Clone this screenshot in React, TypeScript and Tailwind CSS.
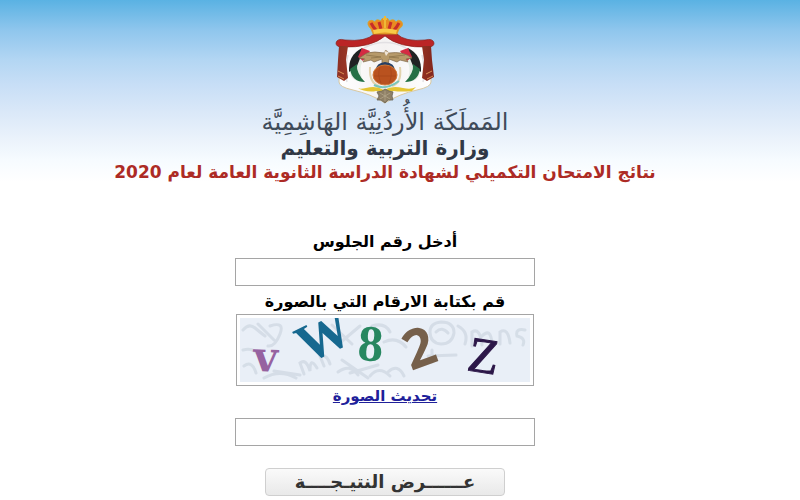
import { useState } from "react";

function Emblem() {
  return (
    <svg viewBox="0 0 130 100" className="h-[100px] w-[130px]" role="img" aria-label="شعار المملكة">
      <defs>
        <linearGradient id="mantle" x1="0" x2="1">
          <stop offset="0" stopColor="#fff" />
          <stop offset="0.5" stopColor="#f4f2f2" />
          <stop offset="1" stopColor="#fff" />
        </linearGradient>
        <linearGradient id="drape" x1="0" x2="1">
          <stop offset="0" stopColor="#8d2f22" />
          <stop offset="0.5" stopColor="#c2502f" />
          <stop offset="1" stopColor="#82261d" />
        </linearGradient>
      </defs>
      <path d="M20 36 Q48 34 65 24 Q83 34 110 36 L111 72 Q111 77 97 80 Q79 84 65 93 Q51 84 33 80 Q19 77 19 72Z" fill="url(#mantle)" stroke="#d9c8a0" strokeWidth="1" />
      <path d="M44 38 Q65 27 86 38 M28 45 Q24 60 27 72 M102 45 Q106 60 103 72" fill="none" stroke="#e2e0e3" strokeWidth="1.5" />
      <path d="M16 33 Q17 28 25 30 Q46 32 54 24 H77 Q85 32 105 30 Q113 28 114 33 Q114 37 108 37 Q79 38 65 26 Q51 38 22 37 Q16 37 16 33Z" fill="#bb2526" stroke="#8b201b" strokeWidth=".7" />
      <path d="M19 36 H28 L26 50 L28 68 L24 71 L17 67 L18 50Z M102 36 H111 L112 50 L114 67 L107 71 L102 68 L104 50Z" fill="url(#drape)" />
      <path d="M18 61 L24 64 M18 66 L24 69 M106 64 L112 61 M107 69 L113 66" stroke="#dc8f55" strokeWidth="1" />
      <path d="M53 24 L51 19 Q46 14 49 11 Q52 9 55 12 Q56 8 61 11 Q61 8 65 8 Q69 8 69 11 Q74 8 76 12 Q78 9 81 11 Q85 15 79 19 L77 24Z" fill="#e98b22" stroke="#d4a32b" strokeWidth=".8" />
      <path d="M51 13 Q53 17 56 20 M59 12 L61 19 M71 12 L69 19 M79 13 Q77 17 74 20" stroke="#c82d29" strokeWidth="3" fill="none" />
      <path d="M53 20 Q65 17 77 20 L76 24 Q65 21 54 24Z" fill="#f8ca47" />
      <path d="M65 6V18M63 9H67" stroke="#efb936" strokeWidth="2" />
      <g>
        <path d="M41 40 Q26 50 31 66 Q35 73 43 70 Q37 57 46 46Z" fill="#e6eee6" />
        <path d="M42 38 Q28 45 29 62 L37 56 L41 46Z" fill="#202323" />
        <path d="M30 59 Q32 72 45 72 Q36 63 37 54Z" fill="#247045" />
        <path d="M42 38 L50 41 L43 51 L38 47Z" fill="#d42b43" />
        <path d="M89 40 Q104 50 99 66 Q95 73 87 70 Q93 57 84 46Z" fill="#e6eee6" />
        <path d="M88 38 Q102 45 101 62 L93 56 L89 46Z" fill="#202323" />
        <path d="M100 59 Q98 72 85 72 Q94 63 93 54Z" fill="#247045" />
        <path d="M88 38 L80 41 L87 51 L92 47Z" fill="#d42b43" />
      </g>
      <path d="M64 43 Q54 41 47 43 L39 48 L45 49 L43 52 L51 50 L54 52 L62 49 L62 56 H68 L69 49 L77 52 L80 50 L88 52 L86 49 L92 48 Q83 41 69 43 Q65 38 64 43Z" fill="#b79a6a" stroke="#806748" strokeWidth=".7" />
      <path d="M46 45 L61 47 M51 48 L61 47 M69 47 L85 45 M69 47 L79 48" stroke="#8d7449" strokeWidth=".8" />
      <path d="M64 41 L69 42 L66 46Z" fill="#efe5d8" />
      <path d="M50 57 Q49 73 59 76 M80 57 Q82 73 72 76" fill="none" stroke="#e2d3ae" strokeWidth="2" />
      <path d="M54 75 Q65 81 79 71" stroke="#79c6ba" strokeWidth="2" fill="none" />
      <path d="M56 60 Q56 53 65 52 Q75 53 75 61Z" fill="#274065" />
      <ellipse cx="65" cy="65" rx="12" ry="10" fill="#b9521f" stroke="#d17835" />
      <path d="M54 66 H76 M60 57 Q57 65 61 73 M70 57 Q73 65 69 73" stroke="#a24319" strokeWidth=".6" fill="none" />
      <path d="M35 77 Q39 80 46 78 Q56 75 64 80 Q72 75 83 78 Q91 80 96 77 L92 81 Q81 82 74 81 L65 83 L56 81 Q47 83 35 77Z" fill="#e4c432" />
      <path d="M65 79 L69 81 L73 82 L72 86 L73 90 L68 90 L65 93 L61 90 L57 90 L59 86 L57 82 L62 81Z" fill="#8f8066" stroke="#6a6458" strokeWidth=".8" />
      <path d="M60 83 L70 89 M70 83 L60 89 M65 81V91" stroke="#b5a98d" strokeWidth=".7" />
    </svg>
  );
}

function Captcha() {
  return (
    <svg direction="ltr" viewBox="0 0 290 64" className="block h-[64px] w-full bg-[#e9eff7]" role="img" aria-label="vW82Z">
      <g fill="none" stroke="#cbd4df" strokeWidth="3" opacity=".65" strokeLinecap="round">
        <path d="M3 12 Q9 5 15 10 T25 18 M18 6 L34 22 M30 8 Q45 3 40 16 T28 28 M3 32 Q14 29 19 38 M4 48 Q12 42 16 55 M24 60 Q40 51 56 60 M34 53 L60 57" />
        <path d="M64 56 L60 45 Q66 40 70 53 Q70 38 77 50 M84 48 L80 38 Q87 36 90 46 M98 54 Q110 45 118 57 M102 42 L128 60 M110 55 L138 47" />
        <path d="M92 7 L112 26 M101 24 L120 8 M132 8 Q145 4 150 14 M144 24 Q157 18 166 29 M130 58 Q139 47 150 58 M148 54 Q158 45 164 58" />
        <path d="M190 14 Q190 5 201 4 Q214 4 214 15 Q212 26 201 26 Q190 25 190 14 M196 14 Q202 8 208 15 M188 38 L216 37 M192 44 V32 M218 8 Q229 14 225 26" />
        <path d="M232 28 V14 Q240 9 242 27 M242 18 Q251 9 252 26 M260 26 V14 Q268 9 270 25 M285 12 Q275 10 277 18 Q286 20 283 27" />
      </g>
      <g fontWeight="700">
        <text x="13" y="53" fontSize="42" fontFamily="DejaVu Serif, serif" fill="#9662a0" transform="rotate(2 13 53)">v</text>
        <text x="67" y="46" fontSize="54" fontFamily="Liberation Serif, serif" fill="#16688f" transform="rotate(-26 67 46)">W</text>
        <text x="117" y="42" fontSize="51" fontFamily="Liberation Serif, serif" fill="#278760" transform="rotate(3 117 42)">8</text>
        <text x="171" y="53" fontSize="54" fontFamily="Noto Sans, sans-serif" fill="#76604b" transform="rotate(-20 171 53)">2</text>
        <text x="226" y="52" fontSize="50" fontFamily="Liberation Serif, serif" fontWeight="400" fill="#2c1748" stroke="#2c1748" transform="rotate(9 226 52)">Z</text>
      </g>
    </svg>
  );
}

export default function App() {
  const [seat, setSeat] = useState("");
  const [code, setCode] = useState("");
  return (
    <main dir="rtl" className="min-h-screen bg-white bg-[linear-gradient(to_bottom,#5ab2e3_0px,#8fc6ed_30px,#b3d6f3_60px,#c7def6_84px,#dae8f8_112px,#eaf2fb_138px,#f6fbff_160px,#fff_182px)] pr-[30px] font-['DejaVu_Sans',sans-serif]">
      <header className="flex flex-col items-center pt-[10px]">
        <Emblem />
        <p className="-mt-1 text-[24px] leading-[32px] font-normal whitespace-nowrap text-[#3f4b59]">المَملَكَة الأُردُنِيَّة الهَاشِمِيَّة</p>
        <p className="text-[20px] leading-[20px] font-bold whitespace-nowrap text-[#303846]">وزارة التربية والتعليم</p>
        <h1 className="text-[17px] leading-[28px] font-bold whitespace-nowrap text-[#ad2b25]">نتائج الامتحان التكميلي لشهادة الدراسة الثانوية العامة لعام 2020</h1>
      </header>
      <form className="flex flex-col items-center pt-[44px]" onSubmit={(e) => e.preventDefault()}>
        <label htmlFor="seat" className="pb-1 text-[16px] leading-6 font-bold text-black">أدخل رقم الجلوس</label>
        <input id="seat" value={seat} onChange={(e) => setSeat(e.target.value)} className="h-7 w-[300px] border border-[#a5a5a5] bg-white px-2 text-sm outline-none" />
        <label htmlFor="code" className="pt-1 text-[16px] leading-6 font-bold text-black">قم بكتابة الارقام التي بالصورة</label>
        <div className="w-[298px] border border-[#a5a5a5] bg-white p-[3px]">
          <Captcha />
        </div>
        <a href="#refresh" className="text-[15px] leading-[20px] font-bold text-[#20209a] underline">تحديث الصورة</a>
        <input id="code" value={code} onChange={(e) => setCode(e.target.value)} className="mt-3 h-7 w-[300px] border border-[#a5a5a5] bg-white px-2 text-sm outline-none" />
        <button type="submit" className="mt-[22px] flex h-7 w-60 items-center justify-center rounded-[4px] border border-[#cfcfcf] bg-linear-to-b from-[#fafafa] to-[#e9e9e9] text-[18px] leading-6 font-bold text-[#333]">عــــــرض النتيـجــــة</button>
      </form>
    </main>
  );
}
